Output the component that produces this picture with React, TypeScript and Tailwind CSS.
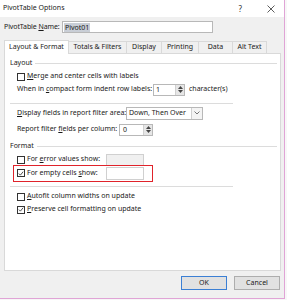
import React from 'react';

const font = { fontFamily: '"Segoe UI", "Noto Sans", "Liberation Sans", sans-serif' };

function Check({ checked }: { checked?: boolean }) {
  return (
    <span className="w-[8px] h-[8px] border border-[#333] bg-white flex items-center justify-center shrink-0">
      {checked && (
        <svg width="7" height="7" viewBox="0 0 7 7">
          <path d="M1 3.6 L2.8 5.4 L6 1.4" fill="none" stroke="#222" strokeWidth="0.9" />
        </svg>
      )}
    </span>
  );
}

function Spin() {
  return (
    <div className="w-[9px] h-full bg-[#e6e6e6] border-l border-[#d0d0d0] flex flex-col items-center justify-center gap-[1px]">
      <svg width="5" height="3" viewBox="0 0 5 3"><path d="M0 3 L2.5 0 L5 3 Z" fill="#444" /></svg>
      <svg width="5" height="3" viewBox="0 0 5 3"><path d="M0 0 L2.5 3 L5 0 Z" fill="#444" /></svg>
    </div>
  );
}

function Tab({ label, active }: { label: string; active?: boolean }) {
  return active ? (
    <div className="h-[14px] bg-white border border-b-0 border-[#d9d9d9] flex items-center relative top-[1px] z-10 w-[65px] justify-center">
      {label}
    </div>
  ) : (
    <div className="h-[12px] border border-l-0 border-b-0 border-[#d9d9d9] flex items-center justify-center">
      {label}
    </div>
  );
}

function Section({ title }: { title: string }) {
  return (
    <div className="h-[10px] flex items-center gap-[3px]">
      <span>{title}</span>
      <div className="flex-1 h-px bg-[#dcdcdc] mr-[3px]" />
    </div>
  );
}

export default function App() {
  return (
    <div className="w-[287px] h-[300px] bg-[#f7f7f7] text-[7px] text-[#1a1a1a] overflow-hidden whitespace-nowrap" style={font}>
      <div className="w-[285px] h-[299px] bg-[#f0f0f0] border-r border-b border-[#e0a4d6] flex flex-col">
        {/* Title bar */}
        <div className="h-[17px] bg-white flex items-center pl-[3px] shrink-0">
          <span className="text-[7px]">PivotTable Options</span>
          <span className="ml-auto mr-[25px] text-[8px] text-[#333]">?</span>
          <svg width="8" height="8" viewBox="0 0 8 8" className="mr-[9px]">
            <path d="M0.5 0.5 L7.5 7.5 M7.5 0.5 L0.5 7.5" stroke="#333" strokeWidth="0.8" />
          </svg>
        </div>

        {/* Name */}
        <div className="flex items-center pl-[4px] mt-[4px] h-[12px]">
          <span className="w-[58px] tracking-[-0.1px]">PivotTable <u>N</u>ame:</span>
          <div className="w-[151px] h-[12px] bg-white border border-[#b8b8b8] flex items-center pl-[1px]">
            <span className="bg-[#c9ced6] px-[1px] leading-[9px]">Pivot01</span>
          </div>
        </div>

        {/* Tabs */}
        <div className="flex items-end pl-[4px] mt-[5px] h-[15px]">
          <Tab label="Layout & Format" active />
          <div className="w-[58px]"><Tab label="Totals & Filters" /></div>
          <div className="w-[35px]"><Tab label="Display" /></div>
          <div className="w-[37px]"><Tab label="Printing" /></div>
          <div className="w-[34px]"><Tab label="Data" /></div>
          <div className="w-[34px]"><Tab label="Alt Text" /></div>
        </div>

        {/* Panel */}
        <div className="mx-[4px] w-[277px] h-[218px] bg-white border border-[#d9d9d9] pl-[5px] pt-[4px] flex flex-col">
          <Section title="Layout" />
          <div className="h-[13px] flex items-center gap-[2px] pl-[7px] mt-[2px]">
            <Check />
            <span><u>M</u>erge and center cells with labels</span>
          </div>
          <div className="h-[13px] flex items-center pl-[7px]">
            <span className="w-[136px]">When in <u>c</u>ompact form indent row labels:</span>
            <div className="w-[32px] h-[12px] border border-[#b8b8b8] bg-white flex">
              <span className="flex-1 pl-[2px] leading-[10px]">1</span>
              <Spin />
            </div>
            <span className="ml-[4px]">character(s)</span>
          </div>
          <div className="h-px bg-[#dcdcdc] w-[223px] mt-[7px]" />
          <div className="h-[14px] flex items-center pl-[7px] mt-[2px]">
            <span className="w-[109px]"><u>D</u>isplay fields in report filter area:</span>
            <div className="w-[77px] h-[13px] border border-[#b8b8b8] bg-white flex items-center">
              <span className="flex-1 pl-[2px]">Down, Then Over</span>
              <div className="w-[11px] h-full border-l border-[#d0d0d0] bg-[#f4f4f4] flex items-center justify-center">
                <svg width="6" height="4" viewBox="0 0 6 4"><path d="M0.5 0.5 L3 3 L5.5 0.5" fill="none" stroke="#555" strokeWidth="0.8" /></svg>
              </div>
            </div>
          </div>
          <div className="h-[13px] flex items-center pl-[7px] mt-[3px]">
            <span className="w-[102px]">Report filter <u>f</u>ields per column:</span>
            <div className="w-[34px] h-[12px] border border-[#b8b8b8] bg-white flex">
              <span className="flex-1 pl-[3px] leading-[10px]">0</span>
              <Spin />
            </div>
          </div>
          <div className="mt-[5px]"><Section title="Format" /></div>
          <div className="h-[13px] flex items-center gap-[2px] pl-[7px] mt-[2px]">
            <Check />
            <span className="w-[77px]">For <u>e</u>rror values show:</span>
            <div className="w-[38px] h-[12px] border border-[#d0d0d0] bg-[#f0f0f0]" />
          </div>
          <div className="relative h-[14px] flex items-center gap-[2px] pl-[7px]">
            <Check checked />
            <span className="w-[77px]">For empty cells <u>s</u>how:</span>
            <div className="w-[38px] h-[13px] border border-[#d0d0d0] bg-white" />
            <div className="absolute left-[3px] top-[-1px] w-[140px] h-[17px] border-[1.5px] border-[#e0232b] pointer-events-none" />
          </div>
          <div className="h-px bg-[#dcdcdc] w-[223px] mt-[6px]" />
          <div className="h-[13px] flex items-center gap-[2px] pl-[7px] mt-[3px]">
            <Check />
            <span><u>A</u>utofit column widths on update</span>
          </div>
          <div className="h-[13px] flex items-center gap-[2px] pl-[7px]">
            <Check checked />
            <span><u>P</u>reserve cell formatting on update</span>
          </div>
        </div>

        {/* Buttons */}
        <div className="flex justify-end gap-[7px] pr-[4px] mt-[5px]">
          <button className="w-[46px] h-[14px] bg-[#e1e1e1] border border-[#3b7fd4] text-[7px] flex items-center justify-center">OK</button>
          <button className="w-[46px] h-[14px] bg-[#e1e1e1] border border-[#adadad] text-[7px] flex items-center justify-center">Cancel</button>
        </div>
      </div>
    </div>
  );
}
